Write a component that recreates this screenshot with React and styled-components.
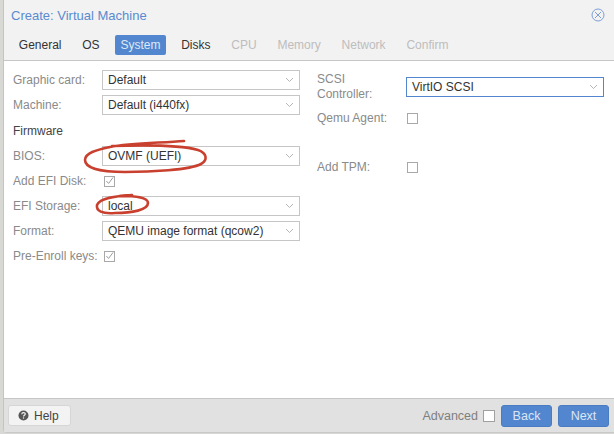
import React from 'react';
import styled, { createGlobalStyle } from 'styled-components';

const Global = createGlobalStyle`
  html, body { margin: 0; padding: 0; width: 614px; height: 434px; overflow: hidden; background: #d8d8d4; }
  #root { width: 614px; height: 434px; }
  * { box-sizing: border-box; }
`;
const Page = styled.div`
  position: relative;
  width: 614px;
  height: 434px;
  padding: 0 0 1px 3px;
  font-family: "Liberation Sans", Arial, sans-serif;
  font-size: 12px;
  color: #333;
`;
const Win = styled.div`
  height: 100%;
  display: flex;
  flex-direction: column;
  background: #f2f2f2;
  border-left: 1px solid #c4c4c4;
  border-bottom: 1px solid #c8c8c8;
  border-radius: 0 0 0 4px;
`;
const TitleBar = styled.div`
  height: 30px;
  flex: none;
  display: flex;
  align-items: center;
  justify-content: space-between;
  padding: 0 9px 0 7px;
  color: #5a8ad0;
  font-size: 13px;
`;
const Tabs = styled.div`
  height: 30px;
  flex: none;
  display: flex;
  align-items: flex-start;
  gap: 9.2px;
  padding: 5px 0 0 9px;
`;
const Tab = styled.div`
  height: 20px;
  padding: 0 5.8px;
  display: flex;
  align-items: center;
  border-radius: 2px;
  font-size: 12px;
  color: ${p => (p.$active ? '#dfe8f6' : p.$disabled ? '#bdbdbd' : '#333')};
  background: ${p => (p.$active ? '#5287d0' : 'transparent')};
`;
const Body = styled.div`
  flex: 1;
  background: #fff;
  border-top: 1px solid #c6c6c6;
  border-bottom: 1px solid #c6c6c6;
  display: grid;
  grid-template-columns: 303px 1fr;
  align-content: start;
`;
const LeftCol = styled.div`
  display: flex;
  flex-direction: column;
  gap: 5px;
  padding: 9px 7px 0 9px;
`;
const RightCol = styled.div`
  display: flex;
  flex-direction: column;
  padding: 11px 10px 0 10px;
`;
const Row = styled.div`
  height: 20px;
  display: flex;
  align-items: center;
`;
const TallRow = styled(Row)`
  height: 30px;
  margin-bottom: 6px;
`;
const RightRow = styled(Row)`
  height: 20px;
  margin-bottom: ${p => p.$after || 0}px;
`;
const Label = styled.div`
  width: ${p => p.$w || 89}px;
  flex: none;
  color: #8a8a8a;
  font-size: 12px;
  line-height: 15px;
  white-space: pre-line;
`;
const Section = styled.div`
  height: 21px;
  display: flex;
  align-items: center;
  padding-top: 1px;
  color: #444;
  font-size: 12px;
`;
const Select = styled.div`
  flex: 1;
  height: 20px;
  display: flex;
  align-items: center;
  justify-content: space-between;
  padding: 0 5px 0 5px;
  background: #fff;
  border: 1px solid ${p => (p.$focus ? '#5287d0' : '#c6c6c6')};
  font-size: 12px;
  color: #333;
`;
const Check = styled.div`
  width: 11px;
  height: 11px;
  border: 1px solid #a8a8a8;
  background: #fff;
  display: flex;
  align-items: center;
  justify-content: center;
  margin-left: ${p => p.$ml || 0}px;
`;
const Footer = styled.div`
  height: 33px;
  flex: none;
  background: #e1e1e1;
  display: flex;
  align-items: center;
  justify-content: space-between;
  padding: 0 0 0 4px;
`;
const HelpBtn = styled.div`
  width: 63px;
  height: 21px;
  display: flex;
  align-items: center;
  gap: 5px;
  padding-left: 9px;
  background: #f3f3f3;
  border: 1px solid #d6d6d6;
  border-radius: 3px;
  font-size: 12px;
  color: #444;
`;
const Actions = styled.div`
  display: flex;
  align-items: center;
`;
const AdvLabel = styled.div`
  color: #7f7f7f;
  font-size: 12.5px;
  margin-right: 5px;
`;
const AdvCheck = styled(Check)`
  width: 12px;
  height: 12px;
  border-color: #a0a0a0;
  margin-right: 6px;
`;
const Primary = styled.div`
  width: 51px;
  height: 22px;
  margin-right: 6px;
  display: flex;
  align-items: center;
  justify-content: center;
  background: #5287d0;
  border: 1px solid #4a7cc2;
  border-radius: 3px;
  color: #dbe6f5;
  font-size: 12.5px;
  &:last-child { margin-right: 5px; }
`;
const Ink = styled.svg`
  position: absolute;
  left: 0;
  top: 0;
  pointer-events: none;
`;

const Chevron = () => (
  <svg width="9" height="6" viewBox="0 0 9 6"><path d="M1 1l3.5 3.5L8 1" fill="none" stroke="#b5b5b5" strokeWidth="1" /></svg>
);
const Tick = () => (
  <svg width="10" height="10" viewBox="0 0 10 10"><path d="M1.5 5l2.5 2.7L9 1" fill="none" stroke="#9a9a9a" strokeWidth="1.1" /></svg>
);
const Close = () => (
  <svg width="14" height="14" viewBox="0 0 14 14" fill="none" stroke="#7d9fd6" strokeWidth="1"><circle cx="7" cy="7" r="6" /><path d="M4 4l6 6M10 4l-6 6" /></svg>
);
const HelpIcon = () => (
  <svg width="11" height="11" viewBox="0 0 11 11"><circle cx="5.5" cy="5.5" r="5" fill="#555" /><path d="M3.8 4.2c0-2.1 3.5-2.1 3.5-.1 0 1.2-1.8 1.2-1.8 2.5" fill="none" stroke="#f3f3f3" strokeWidth="1.2" /><rect x="4.9" y="7.4" width="1.2" height="1.2" fill="#f3f3f3" /></svg>
);

const Field = ({ label, value }) => (
  <Row><Label>{label}</Label><Select>{value}<Chevron /></Select></Row>
);
const CheckField = ({ label }) => (
  <Row><Label>{label}</Label><Check $ml={2}><Tick /></Check></Row>
);

const tabs = [
  ['General'], ['OS'], ['System', 'a'], ['Disks'],
  ['CPU', 'd'], ['Memory', 'd'], ['Network', 'd'], ['Confirm', 'd'],
];

export default function App() {
  return (
    <Page>
      <Global />
      <Win>
        <TitleBar>Create: Virtual Machine<Close /></TitleBar>
        <Tabs>
          {tabs.map(([t, s]) => <Tab key={t} $active={s === 'a'} $disabled={s === 'd'}>{t}</Tab>)}
        </Tabs>
        <Body>
          <LeftCol>
            <Field label="Graphic card:" value="Default" />
            <Field label="Machine:" value="Default (i440fx)" />
            <Section>Firmware</Section>
            <Field label="BIOS:" value="OVMF (UEFI)" />
            <CheckField label="Add EFI Disk:" />
            <Field label="EFI Storage:" value="local" />
            <Field label="Format:" value="QEMU image format (qcow2)" />
            <CheckField label="Pre-Enroll keys:" />
          </LeftCol>
          <RightCol>
            <TallRow>
              <Label $w={89}>{'SCSI\nController:'}</Label>
              <Select $focus>VirtIO SCSI<Chevron /></Select>
            </TallRow>
            <RightRow $after={29}><Label $w={90}>Qemu Agent:</Label><Check /></RightRow>
            <RightRow><Label $w={90}>Add TPM:</Label><Check /></RightRow>
          </RightCol>
        </Body>
        <Footer>
          <HelpBtn><HelpIcon />Help</HelpBtn>
          <Actions>
            <AdvLabel>Advanced</AdvLabel>
            <AdvCheck />
            <Primary>Back</Primary>
            <Primary>Next</Primary>
          </Actions>
        </Footer>
      </Win>
      <Ink width="614" height="434" fill="none" stroke="#c9402f" strokeWidth="2.6" strokeLinecap="round">
        <path d="M184 141C160 143 130 143 110 147C96 150 85 153 85 160C85 168 100 172 125 172C150 172 190 170 201 164C208 160 207 153 198 150C180 145 140 145 112 146" />
        <path d="M132 195C115 196 100 198 97 205C96 211 102 214 115 213C132 213 148 210 148 203C148 197 135 196 120 196" />
      </Ink>
    </Page>
  );
}
